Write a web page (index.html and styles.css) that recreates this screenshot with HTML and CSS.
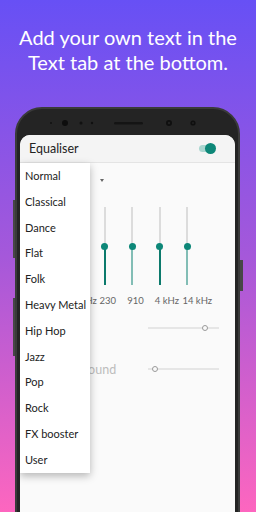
FILE: index.html
```html
<!DOCTYPE html>
<html lang="en">
<head>
  <meta charset="UTF-8">
  <title>Equaliser</title>
  <meta name="viewport" content="width=device-width, initial-scale=1.0">
  <link rel="stylesheet" href="styles.css">
</head>
<body>
  <h1 class="headline">Add your own text in the<br>Text tab at the bottom.</h1>

  <div class="phone">
    <svg class="bezel" width="219" height="26" viewBox="0 0 219 26">
      <circle cx="31" cy="14" r="1" fill="#111"/>
      <circle cx="45" cy="14" r="3" fill="#0d0d0d"/>
      <circle cx="61" cy="14" r="1.5" fill="#111"/>
      <circle cx="72" cy="14" r="1.2" fill="#111"/>
      <rect x="94" y="13" width="29" height="2.4" rx="1.2" fill="#141414"/>
      <circle cx="149" cy="14" r="3" fill="#0f0f0f"/>
      <circle cx="149" cy="14" r="1.2" fill="#222"/>
      <circle cx="173" cy="14" r="2.6" fill="#0f0f0f"/>
      <circle cx="173" cy="14" r="1" fill="#222"/>
    </svg>

    <div class="screen">
      <div class="appbar">
        <span class="title">Equaliser</span>
        <span class="toggle"><span class="knob"></span></span>
      </div>

      <div class="content">
        <div class="preset-row">
          <span class="preset-name"></span>
          <span class="caret"></span>
        </div>

        <div class="bands">
          <div class="band">
            <div class="track dark"><span class="thumb"></span></div>
            <span class="freq">60 Hz</span>
          </div>
          <div class="band">
            <div class="track dark"><span class="thumb"></span></div>
            <span class="freq">230</span>
          </div>
          <div class="band">
            <div class="track light"><span class="thumb"></span></div>
            <span class="freq">910</span>
          </div>
          <div class="band">
            <div class="track dark"><span class="thumb"></span></div>
            <span class="freq">4 kHz</span>
          </div>
          <div class="band">
            <div class="track light"><span class="thumb"></span></div>
            <span class="freq">14 kHz</span>
          </div>
        </div>

        <div class="effect bass">
          <span class="effect-name"></span>
          <div class="hslider"><span class="hthumb high"></span></div>
        </div>

        <div class="effect surround">
          <span class="effect-name">Surround sound</span>
          <div class="hslider"><span class="hthumb low"></span></div>
        </div>

        <ul class="menu">
          <li>Normal</li>
          <li>Classical</li>
          <li>Dance</li>
          <li>Flat</li>
          <li>Folk</li>
          <li>Heavy Metal</li>
          <li>Hip Hop</li>
          <li>Jazz</li>
          <li>Pop</li>
          <li>Rock</li>
          <li>FX booster</li>
          <li>User</li>
        </ul>
      </div>
    </div>
  </div>
</body>
</html>
```

FILE: styles.css
```css
body {
  margin: 0;
  width: 256px;
  height: 512px;
  overflow: hidden;
  font-family: Lato, 'Noto Sans', sans-serif;
  background: linear-gradient(180deg, #6750f5 0%, #a558da 50%, #fd66bf 100%);
}

.headline {
  margin: 0;
  padding-top: 25px;
  font-size: 20px;
  font-weight: 400;
  line-height: 25px;
  color: #fff;
  text-align: center;
}

.phone {
  position: relative;
  box-sizing: border-box;
  width: 225px;
  height: 420px;
  margin: 32px 0 0 15px;
  padding: 0 3px;
  background: #242424;
  border: 2px solid #3a3a3a;
  border-radius: 27px 27px 0 0;
}

/* side buttons */
.phone::before {
  content: "";
  position: absolute;
  left: -4px;
  top: 91px;
  width: 2px;
  height: 58px;
  background: #474747;
  box-shadow: 0 98px 0 #474747;
}

.phone::after {
  content: "";
  position: absolute;
  right: -5px;
  top: 151px;
  width: 3px;
  height: 31px;
  background: #474747;
}

.bezel {
  display: block;
}

.screen {
  height: 392px;
  background: #fafafa;
  border-radius: 10px 10px 0 0;
  overflow: hidden;
}

.appbar {
  display: flex;
  align-items: center;
  height: 27px;
  padding-left: 9px;
  background: #f4f4f4;
  border-bottom: 1px solid #e4e4e4;
}

.title {
  flex: 1;
  font-size: 12.5px;
  color: #222;
}

.toggle {
  position: relative;
  width: 14px;
  height: 7px;
  margin-right: 22px;
  border-radius: 4px;
  background: #a9d6d0;
}

.knob {
  position: absolute;
  left: 6px;
  top: -2px;
  width: 11px;
  height: 11px;
  border-radius: 50%;
  background: #0d8778;
}

.content {
  position: relative;
}

.preset-row {
  display: flex;
  align-items: center;
  height: 34px;
  padding-left: 9px;
}

.preset-name {
  width: 71px;
}

.caret {
  width: 0;
  height: 0;
  border-left: 2.5px solid transparent;
  border-right: 2.5px solid transparent;
  border-top: 3px solid #666;
}

.bands {
  display: flex;
  margin-top: 10px;
  padding-left: 52px;
}

.band {
  display: flex;
  flex-direction: column;
  width: 27.6px;
}

.track {
  position: relative;
  width: 2px;
  height: 78px;
  margin-left: 4px;
}

.track.dark {
  background: linear-gradient(180deg, #dcdcdc 0 39px, #0c7a6c 39px);
}

.track.light {
  background: linear-gradient(180deg, #dcdcdc 0 39px, #82bdb5 39px);
}

.thumb {
  position: absolute;
  left: -2.5px;
  top: 35.5px;
  width: 7px;
  height: 7px;
  border-radius: 50%;
  background: #0d8778;
}

.freq {
  margin-top: 10px;
  font-size: 9.5px;
  line-height: 12px;
  color: #666;
  white-space: nowrap;
}

.effect {
  display: flex;
  align-items: center;
  height: 24px;
  padding: 0 16px 0 9px;
}

.bass {
  margin-top: 9px;
}

.surround {
  margin-top: 17px;
}

.effect-name {
  flex: 1;
  font-size: 12.5px;
  color: #bdbdbd;
  white-space: nowrap;
}

.hslider {
  position: relative;
  width: 71px;
  height: 2px;
  background: #e6e6e6;
}

.hthumb {
  position: absolute;
  top: -2px;
  box-sizing: border-box;
  width: 6px;
  height: 6px;
  border: 1px solid #9a9a9a;
  border-radius: 50%;
  background: #fafafa;
}

.hthumb.high {
  left: 54px;
}

.hthumb.low {
  left: 4px;
}

.menu {
  position: absolute;
  left: 0;
  top: 0;
  width: 70px;
  margin: 0;
  padding: 0;
  list-style: none;
  background: #fff;
  box-shadow: 0 3px 8px rgba(0, 0, 0, 0.28);
}

.menu li {
  height: 25.8px;
  padding-left: 5px;
  font-size: 11px;
  line-height: 25.8px;
  color: #222;
  white-space: nowrap;
}
```
